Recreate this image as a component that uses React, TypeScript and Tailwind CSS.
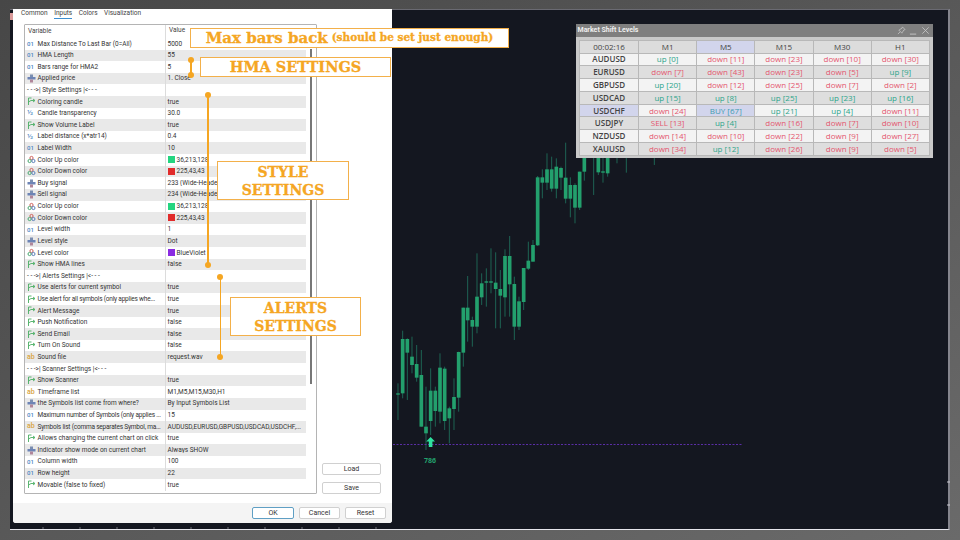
import React from 'react';

type IconKind = 'num' | 'frac' | 'str' | 'bool' | 'enum' | 'color' | 'none';

interface InputRow {
  label: string;
  value: string;
  icon: IconKind;
  swatch?: string;
}

const inputRows: InputRow[] = [
  { label: 'Max Distance To Last Bar (0=All)', value: '5000', icon: 'num' },
  { label: 'HMA Length', value: '55', icon: 'num' },
  { label: 'Bars range for HMA2', value: '5', icon: 'num' },
  { label: 'Applied price', value: '1. Close', icon: 'enum' },
  { label: '- - ->| Style Settings |<- - -', value: '', icon: 'none' },
  { label: 'Coloring candle', value: 'true', icon: 'bool' },
  { label: 'Candle transparency', value: '30.0', icon: 'frac' },
  { label: 'Show Volume Label', value: 'true', icon: 'bool' },
  { label: 'Label distance (x*atr14)', value: '0.4', icon: 'frac' },
  { label: 'Label Width', value: '10', icon: 'num' },
  { label: 'Color Up color', value: '36,213,128', icon: 'color', swatch: '#24d580' },
  { label: 'Color Down color', value: '225,43,43', icon: 'color', swatch: '#e12b2b' },
  { label: 'Buy signal', value: '233 (Wide-Headed...', icon: 'enum' },
  { label: 'Sell signal', value: '234 (Wide-Headed...', icon: 'enum' },
  { label: 'Color Up color', value: '36,213,128', icon: 'color', swatch: '#24d580' },
  { label: 'Color Down color', value: '225,43,43', icon: 'color', swatch: '#e12b2b' },
  { label: 'Level width', value: '1', icon: 'num' },
  { label: 'Level style', value: 'Dot', icon: 'enum' },
  { label: 'Level color', value: 'BlueViolet', icon: 'color', swatch: '#8a2be2' },
  { label: 'Show HMA lines', value: 'false', icon: 'bool' },
  { label: '- - ->| Alerts Settings |<- - -', value: '', icon: 'none' },
  { label: 'Use alerts for current symbol', value: 'true', icon: 'bool' },
  { label: 'Use alert for all symbols (only applies whe...', value: 'true', icon: 'bool' },
  { label: 'Alert Message', value: 'true', icon: 'bool' },
  { label: 'Push Notification', value: 'false', icon: 'bool' },
  { label: 'Send Email', value: 'false', icon: 'bool' },
  { label: 'Turn On Sound', value: 'false', icon: 'bool' },
  { label: 'Sound file', value: 'request.wav', icon: 'str' },
  { label: '- - ->| Scanner Settings |<- - -', value: '', icon: 'none' },
  { label: 'Show Scanner', value: 'true', icon: 'bool' },
  { label: 'Timeframe list', value: 'M1,M5,M15,M30,H1', icon: 'str' },
  { label: 'the Symbols list come from where?', value: 'By Input Symbols List', icon: 'enum' },
  { label: 'Maximum number of Symbols (only applies ...', value: '15', icon: 'num' },
  { label: 'Symbols list (comma separates Symbol, ma...', value: 'AUDUSD,EURUSD,GBPUSD,USDCAD,USDCHF,...', icon: 'str' },
  { label: 'Allows changing the current chart on click', value: 'true', icon: 'bool' },
  { label: 'Indicator show mode on current chart', value: 'Always SHOW', icon: 'enum' },
  { label: 'Column width', value: '100', icon: 'num' },
  { label: 'Row height', value: '22', icon: 'num' },
  { label: 'Movable (false to fixed)', value: 'true', icon: 'bool' },
];

const timeframes = ['M1', 'M5', 'M15', 'M30', 'H1'];

const scanner: { symbol: string; cells: string[] }[] = [
  { symbol: 'AUDUSD', cells: ['up [0]', 'down [11]', 'down [23]', 'down [10]', 'down [30]'] },
  { symbol: 'EURUSD', cells: ['down [7]', 'down [43]', 'down [23]', 'down [5]', 'up [9]'] },
  { symbol: 'GBPUSD', cells: ['up [20]', 'down [12]', 'down [25]', 'down [7]', 'down [2]'] },
  { symbol: 'USDCAD', cells: ['up [15]', 'up [8]', 'up [25]', 'up [23]', 'up [16]'] },
  { symbol: 'USDCHF', cells: ['down [24]', 'BUY [67]', 'up [21]', 'up [4]', 'down [11]'] },
  { symbol: 'USDJPY', cells: ['SELL [13]', 'up [4]', 'down [16]', 'down [7]', 'down [10]'] },
  { symbol: 'NZDUSD', cells: ['down [14]', 'down [10]', 'down [22]', 'down [9]', 'down [27]'] },
  { symbol: 'XAUUSD', cells: ['down [34]', 'up [12]', 'down [26]', 'down [9]', 'down [5]'] },
];

// x, wick top, wick bottom, body top, body bottom (in 3x crop units)
const candles: number[][] = [
  [24, 730, 840, 760, 764],
  [38, 572, 775, 597, 760],
  [52, 595, 780, 597, 638],
  [66, 590, 700, 650, 675],
  [80, 615, 725, 672, 713],
  [94, 630, 860, 705, 860],
  [108, 740, 930, 860, 880],
  [122, 685, 885, 752, 843],
  [136, 740, 860, 752, 813],
  [150, 640, 850, 683, 815],
  [164, 680, 870, 686, 843],
  [178, 800, 910, 805, 835],
  [192, 715, 870, 771, 807],
  [206, 635, 815, 636, 773],
  [220, 503, 680, 503, 638],
  [233, 408, 605, 503, 541],
  [247, 530, 620, 540, 560],
  [261, 340, 580, 470, 560],
  [275, 400, 495, 430, 472],
  [289, 385, 500, 424, 428],
  [303, 325, 460, 424, 428],
  [317, 337, 565, 428, 447],
  [331, 390, 565, 447, 467],
  [345, 328, 530, 348, 472],
  [359, 288, 530, 348, 433],
  [373, 410, 600, 432, 560],
  [387, 470, 570, 484, 560],
  [401, 385, 510, 384, 486],
  [415, 305, 390, 362, 386],
  [429, 300, 365, 315, 365],
  [443, 108, 318, 112, 316],
  [457, 88, 175, 112, 128],
  [471, 40, 150, 88, 128],
  [485, 50, 155, 88, 146],
  [499, 55, 175, 80, 146],
  [513, 80, 150, 84, 113],
  [527, 8, 190, 113, 176],
  [541, 112, 232, 135, 176],
  [555, 130, 250, 135, 203],
  [569, 95, 210, 95, 203],
  [583, 0, 122, 0, 95],
  [611, 0, 165, 0, 10],
  [625, 0, 105, 0, 97],
  [639, 0, 128, 94, 98],
  [653, 0, 110, 0, 100],
  [681, 0, 70, 0, 1],
  [709, 0, 98, 0, 1],
  [793, 0, 75, 0, 1],
];

function RowIcon({ kind }: { kind: IconKind }) {
  if (kind === 'num') return <span className="w-[9px] shrink-0 text-[6px] font-medium text-[#4a86c0]">01</span>;
  if (kind === 'frac') return <span className="w-[9px] shrink-0 text-[8px] text-[#4a86c0]">½</span>;
  if (kind === 'str') return <span className="w-[9px] shrink-0 text-[7px] font-medium text-[#d9a441]">ab</span>;
  if (kind === 'none') return null;
  if (kind === 'bool') {
    return (
      <svg viewBox="0 0 9 9" className="h-[9px] w-[9px] shrink-0" fill="none" stroke="#4aae62" strokeWidth="0.9">
        <path d="M1.5 1v7M1.5 1h3M1.5 5 4 3.5h3.5M6 2l2 1.5L6 5" />
      </svg>
    );
  }
  if (kind === 'enum') {
    return (
      <svg viewBox="0 0 9 9" className="h-[9px] w-[9px] shrink-0">
        <rect x="3" y="0.5" width="3" height="2.5" fill="#7a8db0" />
        <rect x="0.5" y="3" width="8" height="2.5" fill="#6d84b5" />
        <rect x="3" y="5.5" width="3" height="3" fill="#b0869a" />
      </svg>
    );
  }
  return (
    <svg viewBox="0 0 9 9" className="h-[9px] w-[9px] shrink-0" fill="none" strokeWidth="1">
      <circle cx="4.5" cy="3" r="1.6" stroke="#d0605a" />
      <circle cx="2.6" cy="6" r="1.6" stroke="#4aa870" />
      <circle cx="6.4" cy="6" r="1.6" stroke="#5a80b8" />
    </svg>
  );
}

function InputTableRow({ row, index }: { row: InputRow; index: number }) {
  return (
    <div
      className={`flex h-[11.62px] items-center leading-none text-[#333] ${
        index % 2 === 1 ? 'bg-[#e9e9e9]' : 'bg-white'
      }`}
    >
      <div className="flex h-full w-[141px] shrink-0 items-center gap-[1.5px] overflow-hidden whitespace-nowrap border-r border-[#dcdcdc] pl-[2px]">
        <RowIcon kind={row.icon} />
        <span className={row.label.endsWith('...') ? 'tracking-[-0.2px]' : ''}>{row.label}</span>
      </div>
      <div className="flex min-w-0 flex-1 items-center gap-[2px] overflow-hidden whitespace-nowrap pl-[1.5px]">
        {row.swatch && <span className="h-[7px] w-[7px] shrink-0" style={{ backgroundColor: row.swatch }} />}
        <span>{row.value}</span>
      </div>
    </div>
  );
}

function PushButton({ label, className }: { label: string; className: string }) {
  return (
    <button
      type="button"
      className={`flex h-[12px] items-center justify-center rounded-[2px] border bg-white text-[7px] text-[#333] ${className}`}
    >
      {label}
    </button>
  );
}

function SettingsDialog() {
  return (
    <div className="absolute left-[13px] top-[9px] flex h-[514px] w-[379px] flex-col rounded-b-[3px] bg-white font-['Roboto',sans-serif] text-[6.5px]">
      <div className="flex h-[14.5px] shrink-0 items-start gap-[6.5px] pl-[8px] pt-[0.5px] text-[6.5px] leading-[6px] text-[#444]">
        <span>Common</span>
        <span className="border-b border-[#3b8ed0] pb-[2px]">Inputs</span>
        <span>Colors</span>
        <span>Visualization</span>
      </div>

      <div className="flex min-h-0 flex-1">
        <div className="ml-[11px] flex h-[470.5px] w-[293px] rounded-[1px] border border-[#b4b4b4] bg-white">
          <div className="flex w-[281px] flex-col">
            <div className="flex h-[13.5px] items-center text-[#444]">
              <span className="w-[141px] border-r border-[#dcdcdc] pl-[3px] leading-[13.5px]">Variable</span>
              <span className="pl-[3px]">Value</span>
            </div>
            {inputRows.map((row, index) => (
              <InputTableRow key={`${row.label}-${index}`} row={row} index={index} />
            ))}
          </div>
          <div className="flex flex-1 justify-center pt-[24px]">
            <div className="h-[335px] w-[1.5px] bg-[#777]" />
          </div>
        </div>
        <div className="ml-[5px] flex w-[59px] flex-col justify-end gap-[7px] pb-[9px]">
          <PushButton label="Load" className="w-full border-[#d0d0d0]" />
          <PushButton label="Save" className="w-full border-[#d0d0d0]" />
        </div>
      </div>

      <div className="flex h-[20px] shrink-0 items-center justify-end gap-[5px] rounded-b-[3px] bg-[#f4f4f4] pr-[6px]">
        <PushButton label="OK" className="w-[42px] border-[#5f9fc4]" />
        <PushButton label="Cancel" className="w-[41px] border-[#d0d0d0]" />
        <PushButton label="Reset" className="w-[41px] border-[#d0d0d0]" />
      </div>
    </div>
  );
}

function cellColor(text: string) {
  if (text.startsWith('BUY')) return 'text-[#3d9bb0]';
  if (text.startsWith('up')) return 'text-[#2ba58a]';
  return 'text-[#e4566f]';
}

function ScannerPanel() {
  return (
    <div className="absolute left-[576px] top-[24px] h-[134px] w-[357px] bg-[#c9c9c9] font-['Open_Sans',sans-serif]">
      <div className="flex h-[13px] items-center justify-between bg-[#7f7f7f] pl-[1.5px] pr-[3px]">
        <span className="font-['Roboto',sans-serif] text-[7px] font-bold text-[#eeeeee]">Market Shift Levels</span>
        <div className="flex items-center gap-[3px]">
          <svg viewBox="0 0 10 10" className="h-[9px] w-[9px]" fill="none" stroke="#c8c8c8" strokeWidth="0.8">
            <path d="M6 1 9 4 7.5 4.5 6 7 5.5 8 2 4.5 3 4 5.5 2.5ZM3.5 6.5 1 9" />
          </svg>
          <svg viewBox="0 0 10 10" className="h-[9px] w-[9px]" fill="none" stroke="#c8c8c8" strokeWidth="1">
            <path d="M1 9h7" />
          </svg>
          <svg viewBox="0 0 10 10" className="h-[9px] w-[9px]" fill="none" stroke="#c8c8c8" strokeWidth="0.9">
            <path d="M1.5 1.5 8.5 8.5M8.5 1.5 1.5 8.5" />
          </svg>
        </div>
      </div>
      <div className="mx-[3px] mt-[2.5px] grid grid-cols-[58px_repeat(5,57.2px)] gap-px border border-[#b8b8b8] bg-[#b8b8b8] text-[8px] leading-none">
        <div className="flex h-[12px] items-center justify-center bg-[#dcdcdc] font-medium text-[#444]">00:02:16</div>
        {timeframes.map(tf => (
          <div
            key={tf}
            className={`flex h-[12px] items-center justify-center text-[#444] ${
              tf === 'M5' ? 'bg-[#d2d5ec]' : 'bg-[#dcdcdc]'
            }`}
          >
            {tf}
          </div>
        ))}
        {scanner.map((row, rowIndex) => {
          const rowBg = rowIndex % 2 === 0 ? 'bg-[#f3f3f3]' : 'bg-[#dedede]';
          return (
            <React.Fragment key={row.symbol}>
              <div
                className={`flex h-[11.8px] items-center justify-center font-semibold text-[#444] ${
                  row.symbol === 'USDCHF' ? 'bg-[#d2d5ec]' : rowBg
                }`}
              >
                {row.symbol}
              </div>
              {row.cells.map(cell => (
                <div
                  key={`${row.symbol}-${cell}`}
                  className={`flex h-[11.8px] items-center justify-center font-medium ${cellColor(cell)} ${
                    cell.startsWith('BUY') ? 'bg-[#d2d5ec]' : rowBg
                  }`}
                >
                  {cell}
                </div>
              ))}
            </React.Fragment>
          );
        })}
      </div>
    </div>
  );
}

function PriceChart() {
  const ticks = [43, 80, 117, 154, 191, 228, 265, 302, 339, 376];
  return (
    <svg viewBox="0 0 960 540" className="absolute left-0 top-0 h-[540px] w-[960px]">
      <g transform="translate(390 140) scale(0.33333)">
        {candles.map(([x, wt, wb, bt, bb]) => (
          <g key={x}>
            <line x1={x} x2={x} y1={wt} y2={wb} stroke="#1e6353" strokeWidth="3" />
            <rect x={x - 5.5} y={bt} width="11" height={bb - bt} fill="#23a06d" />
          </g>
        ))}
      </g>
      <line x1="393" x2="742" y1="444.5" y2="444.5" stroke="#5a2ea6" strokeWidth="1" strokeDasharray="2 1.5" />
      <path d="M430.6 437 435 441.5 432.4 441.5 432.4 447 428.8 447 428.8 441.5 426.2 441.5Z" fill="#2fe3a0" />
      {ticks.map(x => (
        <line key={x} x1={x} x2={x} y1="527" y2="529" stroke="#9a9aa2" strokeWidth="0.7" />
      ))}
      <line x1="947" x2="950" y1="482" y2="482" stroke="#c8c8d0" />
      <line x1="947" x2="950" y1="505" y2="505" stroke="#c8c8d0" />
    </svg>
  );
}

function Callout({ className, children }: { className: string; children: React.ReactNode }) {
  return (
    <div
      className={`absolute flex flex-col items-center justify-center whitespace-nowrap border-[1.5px] border-[#f3b04a] bg-white font-['DejaVu_Serif',serif] font-bold text-[#f5a623] [-webkit-text-stroke:0.3px_#f5a623] ${className}`}
    >
      {children}
    </div>
  );
}

function Dot({ className }: { className: string }) {
  return <div className={`absolute h-[6px] w-[6px] rounded-full bg-[#f5a623] ${className}`} />;
}

export default function App() {
  return (
    <div className="relative h-[540px] w-[960px] overflow-hidden bg-gradient-to-br from-[#474747] to-[#6a6a6a] pb-[10px] pl-[10px] pr-[10px] pt-[9px]">
      <div className="h-[521px] w-[940px] border-b border-r-2 border-t border-b-[#e6e6ec] border-r-[#85858d] border-t-[#6a6a72] bg-[#141720]" />
      <div className="absolute left-[10px] top-[13px] h-[7px] w-[3px] bg-[#d99a9a]" />

      <PriceChart />
      <span className="absolute left-[424px] top-[456px] font-['Noto_Sans',sans-serif] text-[7px] font-bold text-[#23a06d]">786</span>

      <SettingsDialog />
      <ScannerPanel />

      <Callout className="left-[190px] top-[28px] h-[20px] w-[319px] flex-row items-baseline gap-[4px] text-[15px]">
        <span>Max bars back</span>
        <span className="text-[10.5px]">(should be set just enough)</span>
      </Callout>
      <Callout className="left-[200px] top-[57px] h-[20px] w-[191px] text-[14.5px]">HMA SETTINGS</Callout>
      <Callout className="left-[217px] top-[161px] h-[39px] w-[132px] text-[14px] leading-[18px]">
        <span>STYLE</span>
        <span>SETTINGS</span>
      </Callout>
      <Callout className="left-[230px] top-[297px] h-[39px] w-[131px] text-[14px] leading-[18px]">
        <span>ALERTS</span>
        <span>SETTINGS</span>
      </Callout>

      <div className="absolute left-[190px] top-[59px] h-[15px] w-[1.5px] bg-[#f5a623]" />
      <Dot className="left-[187.5px] top-[56.5px]" />
      <Dot className="left-[187.5px] top-[71.5px]" />
      <div className="absolute left-[207px] top-[95px] h-[170px] w-[1.5px] bg-[#f5a623]" />
      <Dot className="left-[204.5px] top-[91.5px]" />
      <Dot className="left-[204.5px] top-[262px]" />
      <div className="absolute left-[219.5px] top-[277px] h-[80px] w-[1.5px] bg-[#f5a623]" />
      <Dot className="left-[217px] top-[274px]" />
      <Dot className="left-[217px] top-[354px]" />
    </div>
  );
}
